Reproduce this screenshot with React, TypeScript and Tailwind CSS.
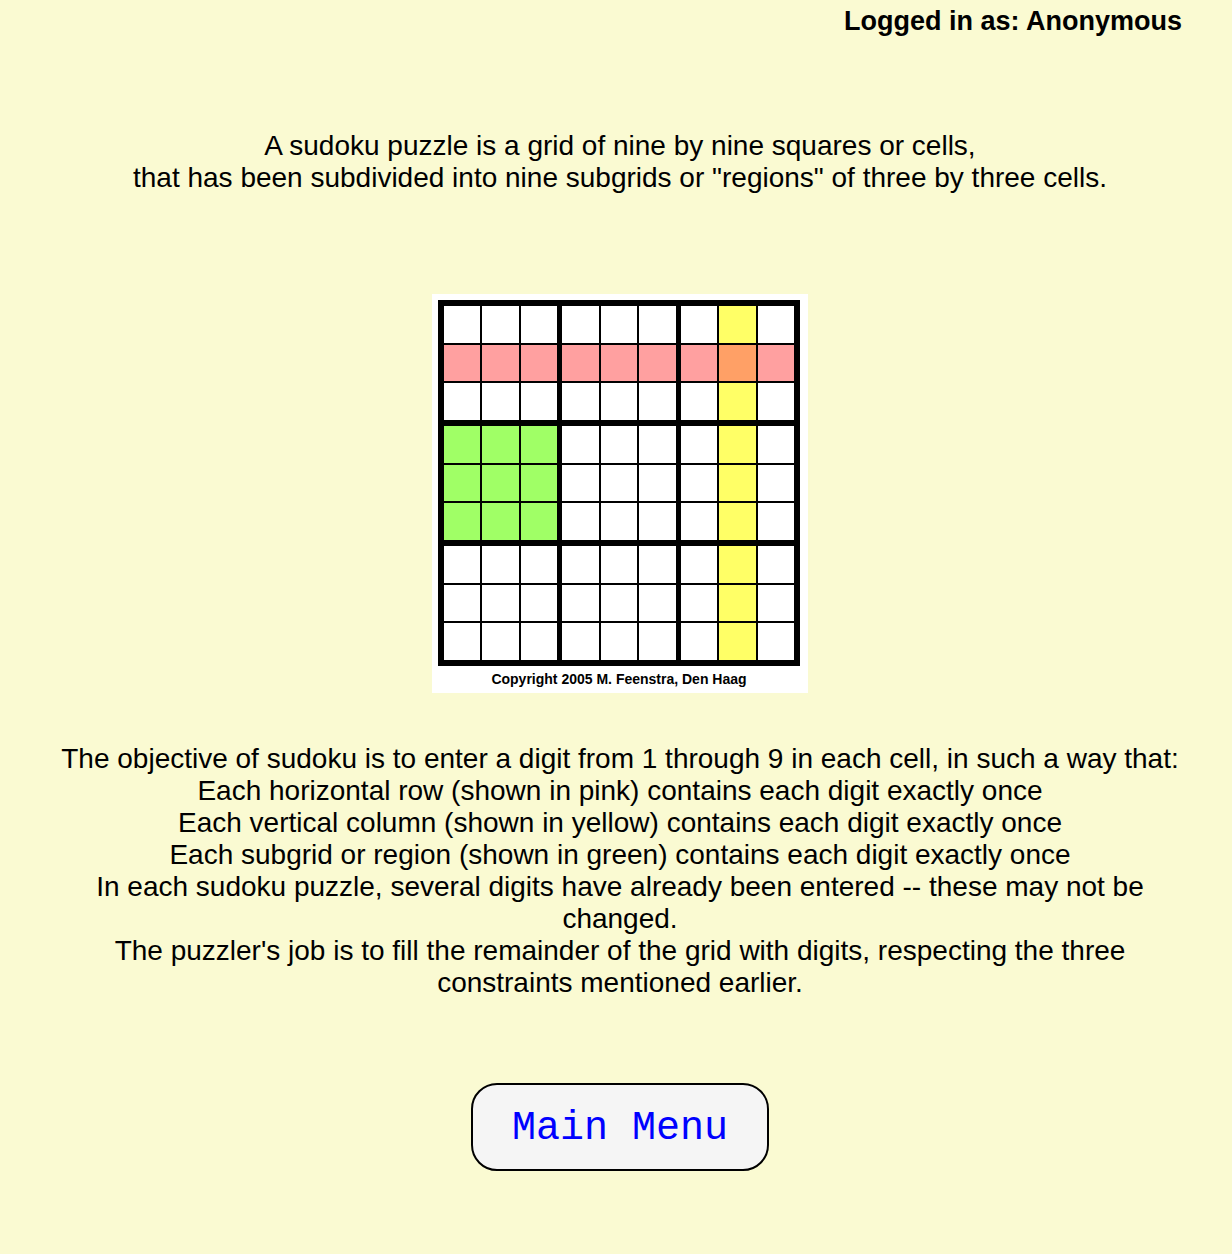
import React from 'react';

const cellColor = (r: number, c: number) => {
  if (r === 1 && c === 7) return 'bg-[#ffa066]';
  if (r === 1) return 'bg-[#ffa0a0]';
  if (c === 7) return 'bg-[#ffff66]';
  if (r >= 3 && r <= 5 && c <= 2) return 'bg-[#a0ff66]';
  return 'bg-white';
};

const SudokuDiagram: React.FC = () => {
  const blocks = [0, 1, 2, 3, 4, 5, 6, 7, 8];
  return (
    <div className="bg-white w-[376px] h-[399px] pt-[6px] pl-[6px] flex flex-col">
      <div className="bg-black w-[362px] h-[366px] p-[6px] grid grid-cols-3 grid-rows-3 gap-x-[5px] gap-y-[6px]">
        {blocks.map((b) => {
          const br = Math.floor(b / 3);
          const bc = b % 3;
          return (
            <div key={b} className="grid grid-cols-3 grid-rows-3 gap-[2px]">
              {blocks.map((i) => {
                const r = br * 3 + Math.floor(i / 3);
                const c = bc * 3 + (i % 3);
                return <div key={i} className={cellColor(r, c)} />;
              })}
            </div>
          );
        })}
      </div>
      <div className="w-[362px] text-center text-[14px] leading-[27px] font-bold text-black font-['Liberation_Sans',Arial,sans-serif]">
        Copyright 2005 M. Feenstra, Den Haag
      </div>
    </div>
  );
};

export default function App() {
  return (
    <div className="min-h-[1254px] bg-[#fafad2] text-black font-['Liberation_Sans',Arial,sans-serif]">
      <div className="flex justify-end pr-[50px] pt-[6px]">
        <span className="text-[27px] leading-[30px] font-bold">Logged in as: Anonymous</span>
      </div>

      <div className="pl-[8px]">
        <div className="mx-[47px] mt-[94px] text-center text-[28px] leading-[32px]">
          <p>A sudoku puzzle is a grid of nine by nine squares or cells,</p>
          <p>that has been subdivided into nine subgrids or "regions" of three by three cells.</p>
        </div>

        <div className="mt-[100px] flex justify-center">
          <SudokuDiagram />
        </div>

        <div className="mx-[47px] mt-[50px] text-center text-[28px] leading-[32px]">
          <p>The objective of sudoku is to enter a digit from 1 through 9 in each cell, in such a way that:</p>
          <p>Each horizontal row (shown in pink) contains each digit exactly once</p>
          <p>Each vertical column (shown in yellow) contains each digit exactly once</p>
          <p>Each subgrid or region (shown in green) contains each digit exactly once</p>
          <p>In each sudoku puzzle, several digits have already been entered -- these may not be changed.</p>
          <p>The puzzler's job is to fill the remainder of the grid with digits, respecting the three constraints mentioned earlier.</p>
        </div>

        <div className="mt-[84px] flex justify-center">
          <button className="w-[298px] h-[88px] pt-[4px] rounded-[26px] border-2 border-black bg-[#f5f5f5] text-[#0000ff] text-[40px] font-['Liberation_Mono','Courier_New',monospace]">
            Main Menu
          </button>
        </div>
      </div>
    </div>
  );
}
